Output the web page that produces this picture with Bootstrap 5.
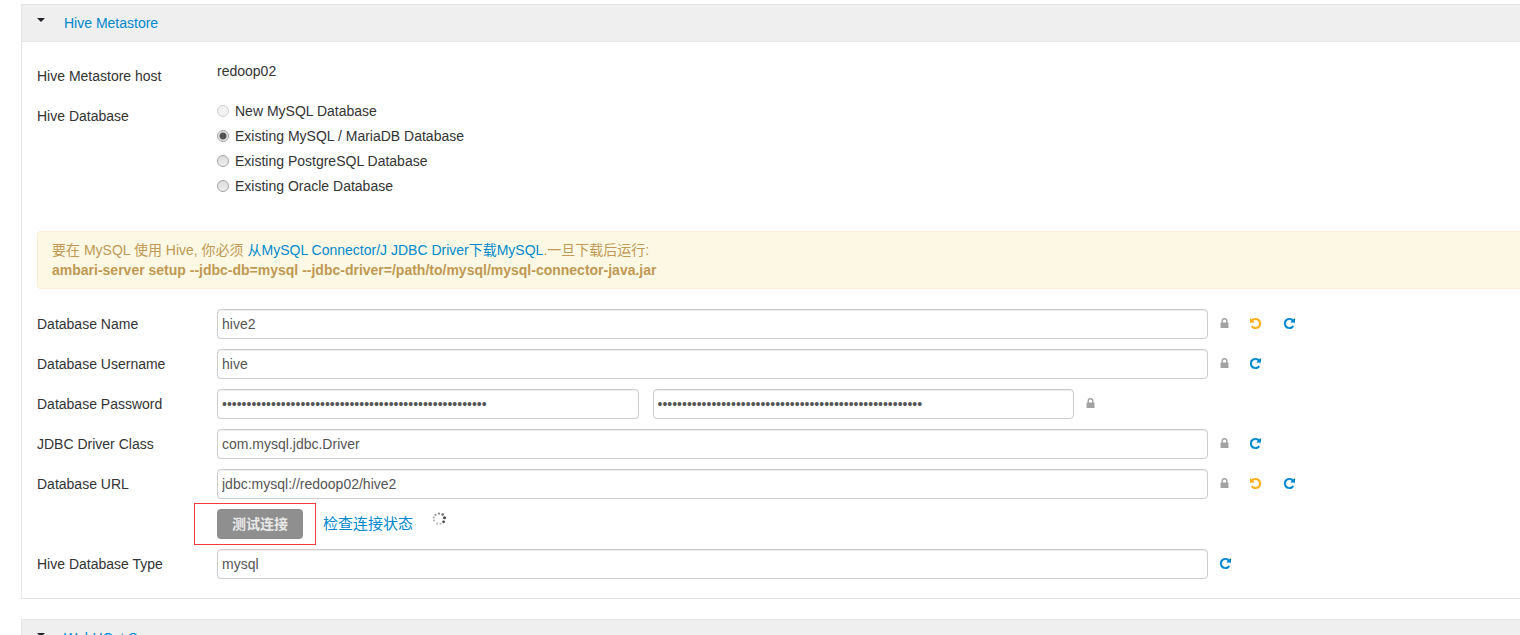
<!DOCTYPE html>
<html lang="zh-CN">
<head>
<meta charset="utf-8">
<meta name="viewport" content="width=device-width, initial-scale=1">
<title>Hive Metastore</title>
<link rel="stylesheet" href="https://cdn.jsdelivr.net/npm/bootstrap@5.3.0/dist/css/bootstrap.min.css">
<style>
  body { font: 14px/20px "Liberation Sans", Arial, "Noto Sans CJK SC", sans-serif; color: #333; background: #fff; }
  a { color: #08c; text-decoration: none; }
  .config-page { padding: 4px 0 0 21px; }
  .config-panel { border: 1px solid #e5e5e5; border-right: 0; margin-bottom: 20px; }
  .panel-head { background: #efefef; border-bottom: 1px solid #e5e5e5; padding: 8px 15px; }
  .panel-toggle { width: 27px; height: 20px; }
  .panel-toggle svg { margin-top: 5px; }
  .panel-content { padding: 19px 0 19px 15px; }
  .config-row { display: grid; grid-template-columns: 180px 1fr 312px; min-height: 30px; margin-bottom: 10px; }
  .config-row.password-row { grid-template-columns: 180px 1fr 446px; }
  .config-row:last-child { margin-bottom: 0; }
  .row-label { padding-top: 5px; }
  .db-options { display: grid; gap: 5px; margin-bottom: 25px; }
  .db-options input { appearance: none; width: 12px; height: 12px; margin: 0 6px 0 0; border: 1px solid #a5a5a5; border-radius: 50%; background: linear-gradient(#dcdcdc, #eee); }
  .db-options input:checked { background: radial-gradient(circle, #555 0 3px, #e6e6e6 4px); }
  .db-options input:disabled { border-color: #d0d0d0; background: #f2f2f2; }
  .driver-note { background: #fcf8e3; border: 1px solid #fbeed5; border-right: 0; border-radius: 4px 0 0 4px; color: #c09853; padding: 8px 14px; margin-bottom: 20px; }
  .config-input { font-size: 14px; line-height: 20px; height: 30px; padding: 4px; color: #555; border: 1px solid #ccc; border-radius: 4px; box-shadow: inset 0 1px 1px rgba(0,0,0,.075); }
  .password-pair { gap: 14px; }
  .row-actions { padding-left: 12px; height: 28px; }
  .row-actions svg { display: block; }
  .lock-mark { width: 9px; margin-right: 21px; color: #a3a3a3; }
  .icon-action { width: 12px; margin-right: 22px; color: #08c; }
  .icon-action.undo { color: #f9ae17; }
  .test-btn { width: 86px; height: 30px; padding: 5px 0; font-size: 14px; line-height: 20px; font-weight: 700; color: #e8e8e8; background: #8f8f8f; border: 0; border-radius: 4px; }
  .test-highlight { inset: -6px -13px -6px -23px; border: 1px solid #f23c3c; pointer-events: none; }
  .status-link { font-size: 15px; margin-left: 20px; }
  .status-spinner { margin: 3px 0 0 19px; }
</style>
</head>
<body>
<svg class="d-none" aria-hidden="true">
  <symbol id="i-lock" viewBox="0 0 8 10"><path fill="currentColor" fill-rule="evenodd" d="M1 4.500V3a3 3 0 0 1 6 0v1.500h.4q.6 0 .6.600v4.300q0 .6-.6.600H.6Q0 10 0 9.400V5.100q0-.6.6-.6zm1.400 0h3.200V3a1.600 1.600 0 0 0-3.200 0z"/></symbol>
  <symbol id="i-repeat" viewBox="0 0 1536 1536"><path fill="currentColor" stroke="currentColor" stroke-width="50" d="M1536 128v448q0 26-19 45t-45 19h-448q-42 0-59-40-17-39 14-69l138-138q-148-137-349-137-104 0-198.500 40.500t-163.500 109.500-109.500 163.500-40.500 198.500 40.500 198.500 109.500 163.500 163.500 109.500 198.500 40.500q119 0 225-52t179-147q7-10 23-12 15 0 25 9l137 138q9 8 9.500 20.500t-7.500 22.500q-109 132-264 204.500t-327 72.500q-156 0-298-61t-245-164-164-245-61-298 61-298 164-245 245-164 298-61q147 0 284.500 55.500t244.500 156.500l130-129q29-31 70-14 39 17 39 59z"/></symbol>
  <symbol id="i-undo" viewBox="0 0 1536 1536"><path fill="currentColor" stroke="currentColor" stroke-width="50" d="M0 128v448q0 26 19 45t45 19h448q42 0 59-40 17-39-14-69l-138-138q148-137 349-137 104 0 198.500 40.500t163.500 109.500 109.500 163.500 40.500 198.500-40.500 198.500-109.500 163.500-163.500 109.500-198.500 40.500q-119 0-225-52t-179-147q-7-10-23-12-15 0-25 9l-137 138q-9 8-9.500 20.500t7.500 22.500q109 132 264 204.500t327 72.500q156 0 298-61t245-164 164-245 61-298-61-298-164-245-245-164-298-61q-147 0-284.500 55.500t-244.500 156.500l-130-129q-29-31-70-14-39 17-39 59z"/></symbol>
  <symbol id="i-caret" viewBox="0 0 8 4"><path fill="currentColor" d="M0 0h8L4 4z"/></symbol>
</svg>

<main class="config-page vh-100 overflow-hidden">
  <section class="config-panel">
    <div class="panel-head d-flex">
      <button type="button" class="panel-toggle btn p-0 border-0 d-flex align-items-start" aria-label="Toggle Hive Metastore"><svg width="8" height="4"><use href="#i-caret"/></svg></button>
      <a href="#metastore">Hive Metastore</a>
    </div>
    <div class="panel-content" id="metastore">
      <div class="config-row">
        <div class="row-label">Hive Metastore host</div>
        <div>redoop02</div>
      </div>
      <div class="config-row">
        <div class="row-label" id="db-label">Hive Database</div>
        <div class="db-options" role="radiogroup" aria-labelledby="db-label">
          <label class="d-flex align-items-center"><input type="radio" name="db" disabled>New MySQL Database</label>
          <label class="d-flex align-items-center"><input type="radio" name="db" checked>Existing MySQL / MariaDB Database</label>
          <label class="d-flex align-items-center"><input type="radio" name="db">Existing PostgreSQL Database</label>
          <label class="d-flex align-items-center"><input type="radio" name="db">Existing Oracle Database</label>
        </div>
      </div>

      <div class="driver-note" role="note">
        <div>要在 MySQL 使用 Hive, 你必须 <a href="#driver">从MySQL Connector/J JDBC Driver下载MySQL</a>.一旦下载后运行:</div>
        <strong class="d-block">ambari-server setup --jdbc-db=mysql --jdbc-driver=/path/to/mysql/mysql-connector-java.jar</strong>
      </div>

      <div class="config-row">
        <label class="row-label" for="db-name">Database Name</label>
        <input class="config-input form-control" id="db-name" type="text" value="hive2">
        <div class="row-actions d-flex align-items-center">
          <span class="lock-mark"><svg width="9" height="10"><use href="#i-lock"/></svg></span>
          <button type="button" class="icon-action undo btn p-0 border-0" aria-label="Undo"><svg width="11" height="11"><use href="#i-undo"/></svg></button>
          <button type="button" class="icon-action btn p-0 border-0" aria-label="Set recommended"><svg width="11" height="11"><use href="#i-repeat"/></svg></button>
        </div>
      </div>
      <div class="config-row">
        <label class="row-label" for="db-user">Database Username</label>
        <input class="config-input form-control" id="db-user" type="text" value="hive">
        <div class="row-actions d-flex align-items-center">
          <span class="lock-mark"><svg width="9" height="10"><use href="#i-lock"/></svg></span>
          <button type="button" class="icon-action btn p-0 border-0" aria-label="Set recommended"><svg width="11" height="11"><use href="#i-repeat"/></svg></button>
        </div>
      </div>
      <div class="config-row password-row">
        <label class="row-label" for="db-pass">Database Password</label>
        <div class="password-pair d-flex">
          <input class="config-input form-control" id="db-pass" type="password" value="aaaaaaaaaaaaaaaaaaaaaaaaaaaaaaaaaaaaaaaaaaaaaaaaaaaaaa">
          <input class="config-input form-control" type="password" aria-label="Confirm password" value="aaaaaaaaaaaaaaaaaaaaaaaaaaaaaaaaaaaaaaaaaaaaaaaaaaaaaa">
        </div>
        <div class="row-actions d-flex align-items-center">
          <span class="lock-mark"><svg width="9" height="10"><use href="#i-lock"/></svg></span>
        </div>
      </div>
      <div class="config-row">
        <label class="row-label" for="db-driver">JDBC Driver Class</label>
        <input class="config-input form-control" id="db-driver" type="text" value="com.mysql.jdbc.Driver">
        <div class="row-actions d-flex align-items-center">
          <span class="lock-mark"><svg width="9" height="10"><use href="#i-lock"/></svg></span>
          <button type="button" class="icon-action btn p-0 border-0" aria-label="Set recommended"><svg width="11" height="11"><use href="#i-repeat"/></svg></button>
        </div>
      </div>
      <div class="config-row">
        <label class="row-label" for="db-url">Database URL</label>
        <input class="config-input form-control" id="db-url" type="text" value="jdbc:mysql://redoop02/hive2">
        <div class="row-actions d-flex align-items-center">
          <span class="lock-mark"><svg width="9" height="10"><use href="#i-lock"/></svg></span>
          <button type="button" class="icon-action undo btn p-0 border-0" aria-label="Undo"><svg width="11" height="11"><use href="#i-undo"/></svg></button>
          <button type="button" class="icon-action btn p-0 border-0" aria-label="Set recommended"><svg width="11" height="11"><use href="#i-repeat"/></svg></button>
        </div>
      </div>
      <div class="config-row">
        <div></div>
        <div class="d-flex align-items-start">
          <div class="position-relative">
            <button type="button" class="test-btn">测试连接</button>
            <span class="test-highlight position-absolute"></span>
          </div>
          <a class="status-link align-self-center" href="#status">检查连接状态</a>
          <svg class="status-spinner" width="14" height="14" viewBox="0 0 14 14" role="img" aria-label="Loading">
            <g fill="#333">
              <circle cx="7" cy="1.700" r="1.100" opacity=".6"/><circle cx="10.700" cy="2.500" r="1.300" opacity=".75"/>
              <circle cx="12.500" cy="5.800" r="1.500" opacity=".9"/><circle cx="11.600" cy="9.800" r="1.400" opacity=".9"/>
              <circle cx="8.500" cy="11.800" r="1" opacity=".35"/><circle cx="5" cy="11.600" r="1" opacity=".35"/>
              <circle cx="2" cy="8.500" r="1" opacity=".4"/><circle cx="1.700" cy="5.500" r="1" opacity=".45"/>
              <circle cx="3.500" cy="2.800" r="1.100" opacity=".55"/>
            </g>
          </svg>
        </div>
      </div>
      <div class="config-row">
        <label class="row-label" for="db-type">Hive Database Type</label>
        <input class="config-input form-control" id="db-type" type="text" value="mysql">
        <div class="row-actions d-flex align-items-center">
          <button type="button" class="icon-action btn p-0 border-0" aria-label="Set recommended"><svg width="11" height="11"><use href="#i-repeat"/></svg></button>
        </div>
      </div>
    </div>
  </section>

  <section class="config-panel">
    <div class="panel-head d-flex">
      <button type="button" class="panel-toggle btn p-0 border-0 d-flex align-items-start" aria-label="Toggle WebHCat Server"><svg width="8" height="4"><use href="#i-caret"/></svg></button>
      <a href="#webhcat">WebHCat Server</a>
    </div>
  </section>
</main>
<script src="https://cdn.jsdelivr.net/npm/bootstrap@5.3.0/dist/js/bootstrap.bundle.min.js"></script>
</body>
</html>
